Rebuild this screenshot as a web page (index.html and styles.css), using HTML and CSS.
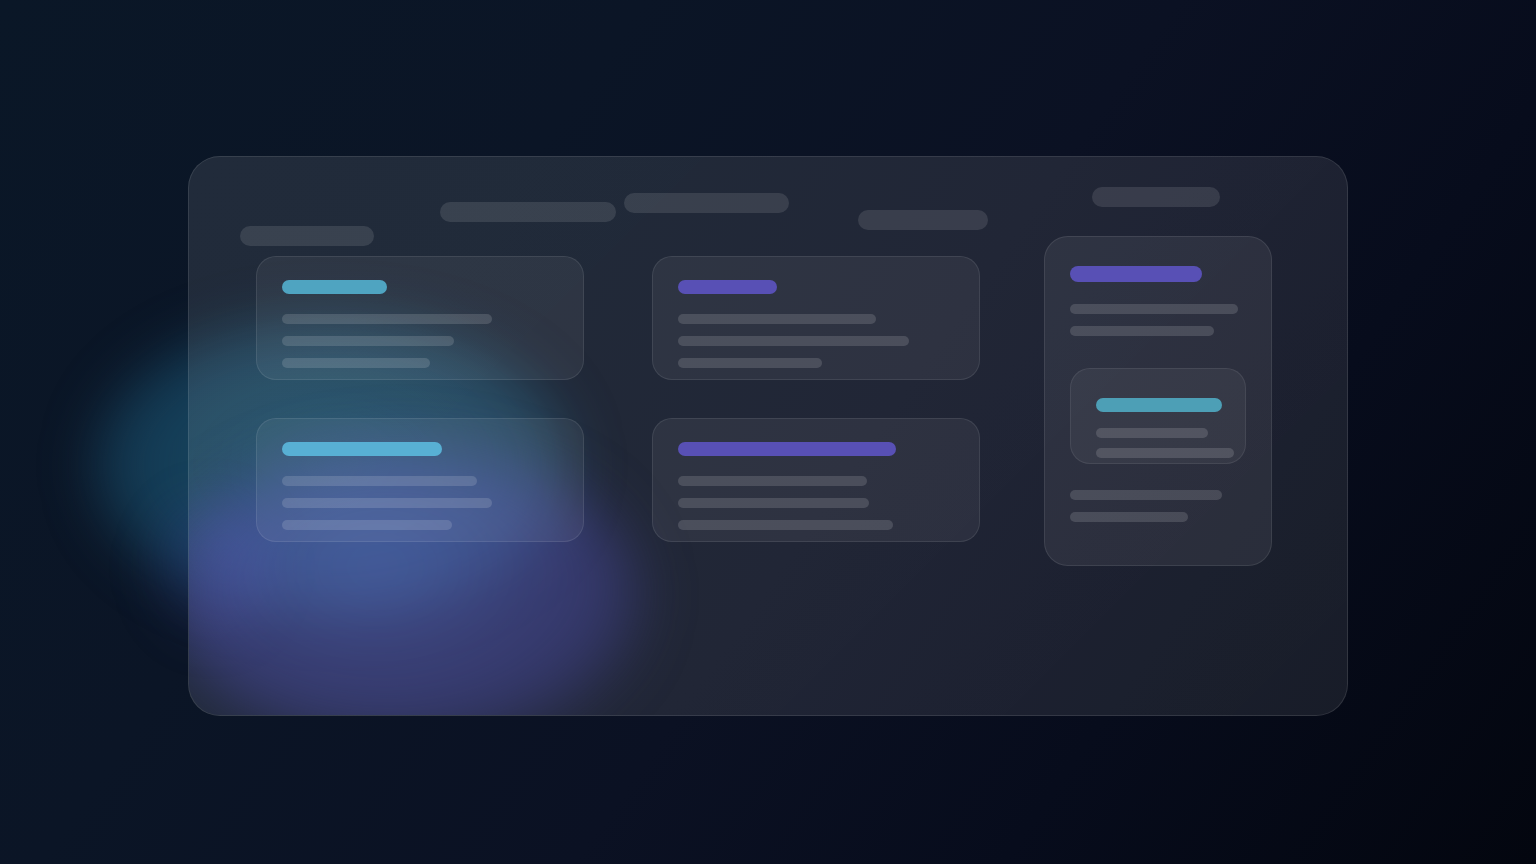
FILE: index.html
```html
<!DOCTYPE html>
<html lang="en">
<head>
<meta charset="utf-8">
<title>Board</title>
<link rel="stylesheet" href="styles.css">
</head>
<body>
<div class="scene">
  <div class="blob blob-cyan"></div>
  <div class="blob blob-purple-out"></div>
  <main class="panel">
    <div class="glow"><div class="blob blob-purple"></div></div>
    <section class="col col-a">
      <div class="head">
        <span class="pill pill-a1"></span>
        <span class="pill pill-a2"></span>
      </div>
      <div class="stack">
        <div class="card">
          <span class="bar cyan" style="width:105px"></span>
          <div class="lines">
            <span class="line" style="width:210px"></span>
            <span class="line" style="width:172px"></span>
            <span class="line" style="width:148px"></span>
          </div>
        </div>
        <div class="card">
          <span class="bar cyan bright" style="width:160px"></span>
          <div class="lines">
            <span class="line" style="width:195px"></span>
            <span class="line" style="width:210px"></span>
            <span class="line" style="width:170px"></span>
          </div>
        </div>
      </div>
    </section>
    <section class="col col-b">
      <div class="head">
        <span class="pill pill-b1"></span>
        <span class="pill pill-b2"></span>
      </div>
      <div class="stack">
        <div class="card">
          <span class="bar purple" style="width:99px"></span>
          <div class="lines">
            <span class="line" style="width:198px"></span>
            <span class="line" style="width:231px"></span>
            <span class="line" style="width:144px"></span>
          </div>
        </div>
        <div class="card">
          <span class="bar purple" style="width:218px"></span>
          <div class="lines">
            <span class="line" style="width:189px"></span>
            <span class="line" style="width:191px"></span>
            <span class="line" style="width:215px"></span>
          </div>
        </div>
      </div>
    </section>
    <section class="col col-c">
      <div class="head head-c">
        <span class="pill pill-c1"></span>
      </div>
      <div class="tall">
        <span class="bar purple tall-bar" style="width:132px"></span>
        <div class="lines">
          <span class="line" style="width:168px"></span>
          <span class="line" style="width:144px"></span>
        </div>
        <div class="inner">
          <span class="bar cyan dim" style="width:126px"></span>
          <div class="lines tight">
            <span class="line" style="width:112px"></span>
            <span class="line" style="width:138px"></span>
          </div>
        </div>
        <div class="lines lower">
          <span class="line" style="width:152px"></span>
          <span class="line" style="width:118px"></span>
        </div>
      </div>
    </section>
  </main>
</div>
</body>
</html>
```
FILE: styles.css
```css
* { box-sizing: border-box; }
html, body { margin: 0; padding: 0; }
body {
  width: 1536px;
  height: 864px;
  overflow: hidden;
  font-family: "Inter", "Liberation Sans", sans-serif;
  background: linear-gradient(125deg, #0a1727 0%, #0b1526 30%, #0b1123 55%, #070c1c 75%, #03060f 100%);
}
.scene {
  position: relative;
  width: 1536px;
  height: 864px;
  padding-top: 156px;
}
.blob {
  position: absolute;
  border-radius: 50%;
}
.blob-cyan {
  left: 92px;
  top: 315px;
  width: 480px;
  height: 300px;
  filter: blur(26px);
  background: radial-gradient(ellipse at 50% 50%, rgba(34, 110, 140, 0.62) 0%, rgba(30, 100, 135, 0.5) 55%, rgba(30, 90, 130, 0) 100%);
}
.blob-purple-out {
  left: 150px;
  top: 500px;
  width: 120px;
  height: 140px;
  filter: blur(22px);
  background: radial-gradient(ellipse at 70% 40%, rgba(60, 70, 160, 0.35) 0%, rgba(60, 60, 150, 0) 100%);
}
.panel {
  position: relative;
  z-index: 0;
  margin-left: 188px;
  width: 1160px;
  height: 560px;
  border-radius: 32px;
  border: 1px solid rgba(255, 255, 255, 0.1);
  background: linear-gradient(135deg, rgba(255, 255, 255, 0.095) 0%, rgba(255, 255, 255, 0.09) 60%, rgba(255, 255, 255, 0.08) 100%);
  display: grid;
  grid-template-columns: 384px 420px 228px;
  padding-left: 51px;
}
.glow {
  position: absolute;
  inset: 0;
  z-index: -1;
  border-radius: 31px;
  overflow: hidden;
}
.blob-purple {
  left: -25px;
  top: 290px;
  width: 475px;
  height: 300px;
  filter: blur(28px);
  background: radial-gradient(ellipse at 45% 40%, rgba(90, 105, 200, 0.55) 0%, rgba(75, 75, 165, 0.47) 60%, rgba(70, 60, 150, 0) 100%);
}
.col { display: flex; flex-direction: column; }
.head {
  height: 99px;
  display: flex;
  align-items: flex-start;
}
.head-c { height: 79px; }
.pill {
  display: block;
  height: 20px;
  border-radius: 10px;
  background: rgba(255, 255, 255, 0.11);
}
.pill-a1 { width: 134px; margin-top: 69px; }
.pill-a2 { width: 176px; margin-top: 45px; margin-left: 66px; }
.pill-b1 { width: 165px; margin-top: 36px; }
.pill-b2 { width: 130px; margin-top: 53px; margin-left: 69px; }
.pill-c1 { width: 128px; margin-top: 30px; margin-left: 48px; }

.stack {
  display: flex;
  flex-direction: column;
  gap: 38px;
}
.col-a .stack { margin-left: 16px; }
.col-b .stack { margin-left: 28px; }

.card {
  width: 328px;
  height: 124px;
  border-radius: 20px;
  border: 1px solid rgba(255, 255, 255, 0.09);
  background: rgba(255, 255, 255, 0.06);
  padding: 23px 25px 0;
}
.bar {
  display: block;
  height: 14px;
  border-radius: 7px;
}
.cyan { background: #4fa4c1; }
.cyan.bright { background: #58b0d4; }
.cyan.dim { background: #4d9fb6; }
.purple { background: #5850b5; }

.lines {
  display: flex;
  flex-direction: column;
  gap: 12px;
  margin-top: 20px;
}
.line {
  display: block;
  height: 10px;
  border-radius: 5px;
  background: rgba(255, 255, 255, 0.14);
}

.tall {
  width: 228px;
  height: 330px;
  border-radius: 24px;
  border: 1px solid rgba(255, 255, 255, 0.09);
  background: rgba(255, 255, 255, 0.065);
  padding: 29px 25px 0;
}
.tall-bar { height: 16px; border-radius: 8px; }
.tall .lines { margin-top: 22px; }
.inner {
  margin-top: 32px;
  width: 176px;
  height: 96px;
  border-radius: 20px;
  border: 1px solid rgba(255, 255, 255, 0.08);
  background: rgba(255, 255, 255, 0.05);
  padding: 29px 0 0 25px;
}
.tall .inner .lines.tight { margin-top: 16px; gap: 10px; }
.tall .lines.lower { margin-top: 26px; }
```
